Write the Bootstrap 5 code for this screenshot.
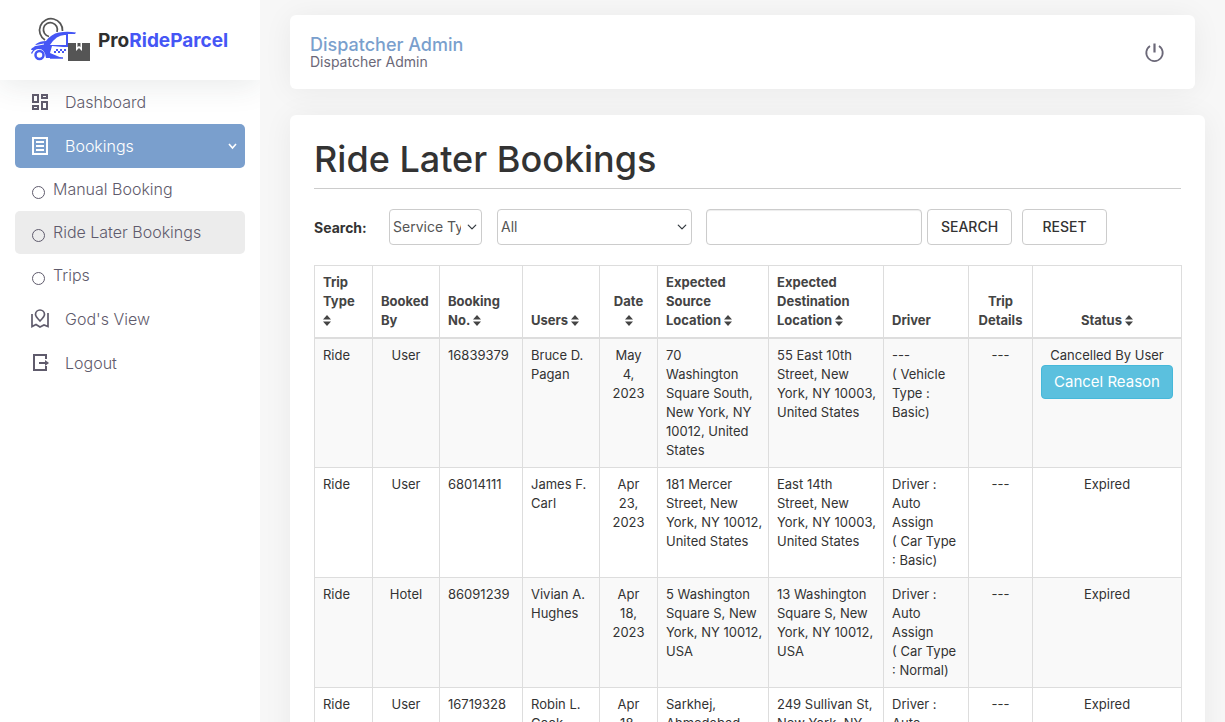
<!DOCTYPE html>
<html lang="en">
<head>
<meta charset="utf-8">
<meta name="viewport" content="width=device-width, initial-scale=1">
<title>Ride Later Bookings</title>
<link href="https://cdn.jsdelivr.net/npm/bootstrap@5.3.0/dist/css/bootstrap.min.css" rel="stylesheet">
<style>
  body { font-family: Inter, "Open Sans", sans-serif; background: #f7f7f7; color: #333; font-size: 13px; line-height: 19px; }
  .side { width: 260px; background: #fff; overflow: hidden; }
  .brand { height: 80px; padding-left: 30px; box-shadow: 0 6px 30px rgba(40,60,60,.1); color: #2f2f2f; font-size: 19px; font-weight: 700; }
  .brand:hover { color: #2f2f2f; }
  .brand b { color: #4556f5; font-weight: 700; }
  .brand svg { width: 62px; height: 46px; margin-right: 6px; }
  .menu { padding: 0 15px; }
  .menu a { height: 44px; padding: 0 8px 0 15px; border-radius: 5px; color: #5f5b6c; font-size: 16px; font-weight: 300; text-decoration: none; }
  .menu .nav-ico { width: 20px; height: 20px; margin-right: 15px; }
  .menu a.sub { height: 43px; }
  .menu .ring { width: 13px; height: 13px; border: 1px solid #5f5b6c; border-radius: 50%; margin: 5px 8px 0 2px; }
  .menu a.open { background: #7a9fcd; color: #fff; }
  .menu a.current { background: #ececec; }
  .content { padding: 15px 20px 30px 30px; overflow-y: auto; scrollbar-width: none; }
  .content::-webkit-scrollbar { display: none; }
  .panel { background: #fff; border-radius: 6px; box-shadow: 0 2px 30px rgba(0,0,0,.06); }
  .userbar { height: 74px; padding: 0 30px 0 20px; margin: 0 10px 26px 0; color: #6b6878; }
  .userbar h2 { font-size: 18px; line-height: 19px; font-weight: 500; color: #7a9fcd; margin: 0; }
  .userbar .role { font-size: 14px; line-height: 16px; }
  .power { color: #6b6878; line-height: 0; }
  .bookings { padding: 24px; }
  h1 { font-size: 36px; line-height: 40px; font-weight: 500; margin: 0; padding-bottom: 9px; border-bottom: 1px solid #ccc; color: #333; }
  .filters { margin: 20px 0; }
  .filters label { width: 75px; font-size: 14px; font-weight: 700; }
  .filters .form-select, .filters .form-control, .filters .btn { height: 36px; border: 1px solid #ccc; border-radius: 4px; font-size: 14px; line-height: 20px; color: #555; }
  .filters .form-select { padding: 0 20px 0 3px; background-size: 10px 10px; background-position: right 4px center; text-overflow: clip; }
  .filters .form-control { width: 216px; margin-right: 5px; box-shadow: inset 0 1px 1px rgba(0,0,0,.075); }
  .filters .btn { width: 85px; padding: 0; margin-right: 10px; background: #fff; color: #333; font-weight: 500; }
  .pick-type { width: 93px; margin-right: 15px; }
  .pick-by { width: 195px; margin-right: 14px; }
  .rides { table-layout: fixed; margin: 0; border-color: #ddd; --bs-table-striped-bg: #f9f9f9; --bs-table-striped-color: #333; --bs-table-color: #333; --bs-table-bg: #fff; }
  .rides th, .rides td { padding: 7px 0 7px 8px; }
  .rides th.text-center, .rides td.text-center { padding: 7px 8px; }
  .rides thead th { vertical-align: bottom; color: #444; font-weight: 700; border-bottom: 2px solid #ddd; }
  .rides a { color: inherit; text-decoration: none; }
  .rides svg { width: 8px; height: 11px; vertical-align: -1px; }
  .reason { width: 100%; height: 34px; padding: 0; background: #5bc0de; border: 1px solid #46b8da; border-radius: 4px; color: #fff; font-size: 15px; }
  .w-type { width: 58px; } .w-by { width: 67px; } .w-no { width: 83px; } .w-user { width: 77px; } .w-date { width: 58px; }
  .w-src { width: 111px; } .w-dst { width: 115px; } .w-drv { width: 85px; } .w-det { width: 64px; } .w-stat { width: 149px; }
</style>
</head>
<body>
<svg class="d-none" xmlns="http://www.w3.org/2000/svg">
  <symbol id="sort" viewBox="0 0 8 11"><path d="M4 0 8 4.600H0zM4 11 0 6.400h8z" fill="currentColor"/></symbol>
</svg>
<div class="d-flex vh-100 overflow-hidden">
  <aside class="side flex-shrink-0">
    <a href="#" class="brand d-flex align-items-center text-decoration-none">
      <svg viewBox="0 0 62 46" fill="none" aria-hidden="true">
        <path d="M15 23A11.500 11.500 0 1 1 32.500 14" stroke="#555" stroke-width="1.700"/>
        <path d="M19 19.500A7 7 0 1 1 27 15" stroke="#555" stroke-width="1.700"/>
        <path d="M1 33Q1 31 4 30L6 27Q10 24 16 24 21 17 29 15.500 37 14 46 15.500L45 17 38 17V30H33L22 29 20 36 32 41H16Q15 32 9 32 4 32 2 37L1 36 3 33zM20 28H36V18Q27 17 20 28z" fill="#4556f5" fill-rule="evenodd"/>
        <path d="M3 29 14 27" stroke="#fff" stroke-width="1"/>
        <circle cx="9.500" cy="38" r="4" stroke="#4556f5" stroke-width="2.500" fill="#fff"/>
        <path d="M26 33h2m2 0h2m2 0h2M24 35h2m2 0h2m2 0h2" stroke="#4556f5" stroke-width="1.800"/>
        <path d="M20 41H33" stroke="#4556f5" stroke-width="1.500"/>
        <path d="M38 26H60V44H38z" fill="#555"/>
        <path d="M46 26V34L49 31 52 34V26h-1.500v4L49 29 47.500 30v-4z" fill="#fff"/>
      </svg>
      <span>Pro<b>RideParcel</b></span>
    </a>
    <nav class="menu d-flex flex-column">
      <a href="#" class="d-flex align-items-center"><svg class="nav-ico" viewBox="0 0 20 20" fill="none" stroke="currentColor" stroke-width="2"><path d="M3 3h5v7H3zM12 3h5v3h-5zM3 14h5v3H3zM12 10h5v7h-5z"/></svg>Dashboard</a>
      <a href="#" class="open d-flex align-items-center"><svg class="nav-ico" viewBox="0 0 20 20" fill="none" stroke="currentColor" stroke-width="2"><path d="M3 2h14v16H3zM6 6h8M6 10h8M6 14h8"/></svg><span class="flex-grow-1">Bookings</span><svg width="9" height="7" viewBox="0 0 9 7" fill="none" stroke="currentColor" stroke-width="1.600"><path d="m1 1 3.500 4L8 1"/></svg></a>
      <a href="#" class="sub d-flex align-items-center"><span class="ring"></span>Manual Booking</a>
      <a href="#" class="sub current d-flex align-items-center"><span class="ring"></span>Ride Later Bookings</a>
      <a href="#" class="sub d-flex align-items-center"><span class="ring"></span>Trips</a>
      <a href="#" class="d-flex align-items-center"><svg class="nav-ico" viewBox="0 0 20 20" fill="none" stroke="currentColor" stroke-width="1.700"><path d="M10 12C7 9 5.500 7.500 5.500 5.500a4.500 4.500 0 0 1 9 0C14.500 7.500 13 9 10 12zM2 5v12.500l4-2 4 2.500 4-2 4 1.500V4"/></svg>God's View</a>
      <a href="#" class="d-flex align-items-center"><svg class="nav-ico" viewBox="0 0 20 20" fill="none" stroke="currentColor" stroke-width="2"><path d="M16 6V2H4v15h12v-4M9 10h8"/><path d="m15 7 4 3-4 3z" fill="currentColor" stroke="none"/></svg>Logout</a>
    </nav>
  </aside>
  <main class="content flex-grow-1">
    <header class="panel userbar d-flex align-items-center justify-content-between">
      <div><h2>Dispatcher Admin</h2><div class="role">Dispatcher Admin</div></div>
      <a href="#" class="power" aria-label="Log out"><svg width="21" height="21" viewBox="0 0 21 21" fill="none" stroke="currentColor" stroke-width="1.800"><path d="M6 4a8.200 8.200 0 1 0 9 0"/><path d="M10.500 1.500v9" stroke-width="2.200"/></svg></a>
    </header>
    <section class="panel bookings">
      <h1>Ride Later Bookings</h1>
      <form class="filters d-flex align-items-center">
        <label for="type">Search:</label>
        <select id="type" class="form-select pick-type"><option>Service Type</option></select>
        <select id="field" class="form-select pick-by" aria-label="Search in"><option>All</option></select>
        <input type="text" class="form-control" aria-label="Keyword">
        <button type="button" class="btn">SEARCH</button>
        <button type="reset" class="btn">RESET</button>
      </form>
      <table class="rides table table-bordered table-striped">
        <colgroup><col class="w-type"><col class="w-by"><col class="w-no"><col class="w-user"><col class="w-date"><col class="w-src"><col class="w-dst"><col class="w-drv"><col class="w-det"><col class="w-stat"></colgroup>
        <thead>
          <tr>
            <th><a href="#">Trip Type<br><svg><use href="#sort"/></svg></a></th>
            <th>Booked By</th>
            <th><a href="#">Booking<br>No. <svg><use href="#sort"/></svg></a></th>
            <th><a href="#">Users <svg><use href="#sort"/></svg></a></th>
            <th class="text-center"><a href="#">Date<br><svg><use href="#sort"/></svg></a></th>
            <th><a href="#">Expected<br>Source<br>Location <svg><use href="#sort"/></svg></a></th>
            <th><a href="#">Expected<br>Destination<br>Location <svg><use href="#sort"/></svg></a></th>
            <th>Driver</th>
            <th class="text-center">Trip Details</th>
            <th class="text-center"><a href="#">Status <svg><use href="#sort"/></svg></a></th>
          </tr>
        </thead>
        <tbody>
          <tr>
            <td>Ride</td><td class="text-center">User</td><td>16839379</td><td>Bruce D.<br>Pagan</td><td class="text-center">May<br>4,<br>2023</td>
            <td>70<br>Washington<br>Square South,<br>New York, NY<br>10012, United<br>States</td>
            <td>55 East 10th<br>Street, New<br>York, NY 10003,<br>United States</td>
            <td>---<br>( Vehicle<br>Type :<br>Basic)</td><td class="text-center">---</td>
            <td class="text-center">Cancelled By User<br><button type="button" class="btn reason">Cancel Reason</button></td>
          </tr>
          <tr>
            <td>Ride</td><td class="text-center">User</td><td>68014111</td><td>James F.<br>Carl</td><td class="text-center">Apr<br>23,<br>2023</td>
            <td>181 Mercer<br>Street, New<br>York, NY 10012,<br>United States</td>
            <td>East 14th<br>Street, New<br>York, NY 10003,<br>United States</td>
            <td>Driver :<br>Auto<br>Assign<br>( Car Type<br>: Basic)</td><td class="text-center">---</td><td class="text-center">Expired</td>
          </tr>
          <tr>
            <td>Ride</td><td class="text-center">Hotel</td><td>86091239</td><td>Vivian A.<br>Hughes</td><td class="text-center">Apr<br>18,<br>2023</td>
            <td>5 Washington<br>Square S, New<br>York, NY 10012,<br>USA</td>
            <td>13 Washington<br>Square S, New<br>York, NY 10012,<br>USA</td>
            <td>Driver :<br>Auto<br>Assign<br>( Car Type<br>: Normal)</td><td class="text-center">---</td><td class="text-center">Expired</td>
          </tr>
          <tr>
            <td>Ride</td><td class="text-center">User</td><td>16719328</td><td>Robin L.<br>Cook</td><td class="text-center">Apr<br>18,<br>2023</td>
            <td>Sarkhej,<br>Ahmedabad</td>
            <td>249 Sullivan St,<br>New York, NY</td>
            <td>Driver :<br>Auto<br>Assign</td><td class="text-center">---</td><td class="text-center">Expired</td>
          </tr>
        </tbody>
      </table>
    </section>
  </main>
</div>
<script src="https://cdn.jsdelivr.net/npm/bootstrap@5.3.0/dist/js/bootstrap.bundle.min.js"></script>
</body>
</html>
